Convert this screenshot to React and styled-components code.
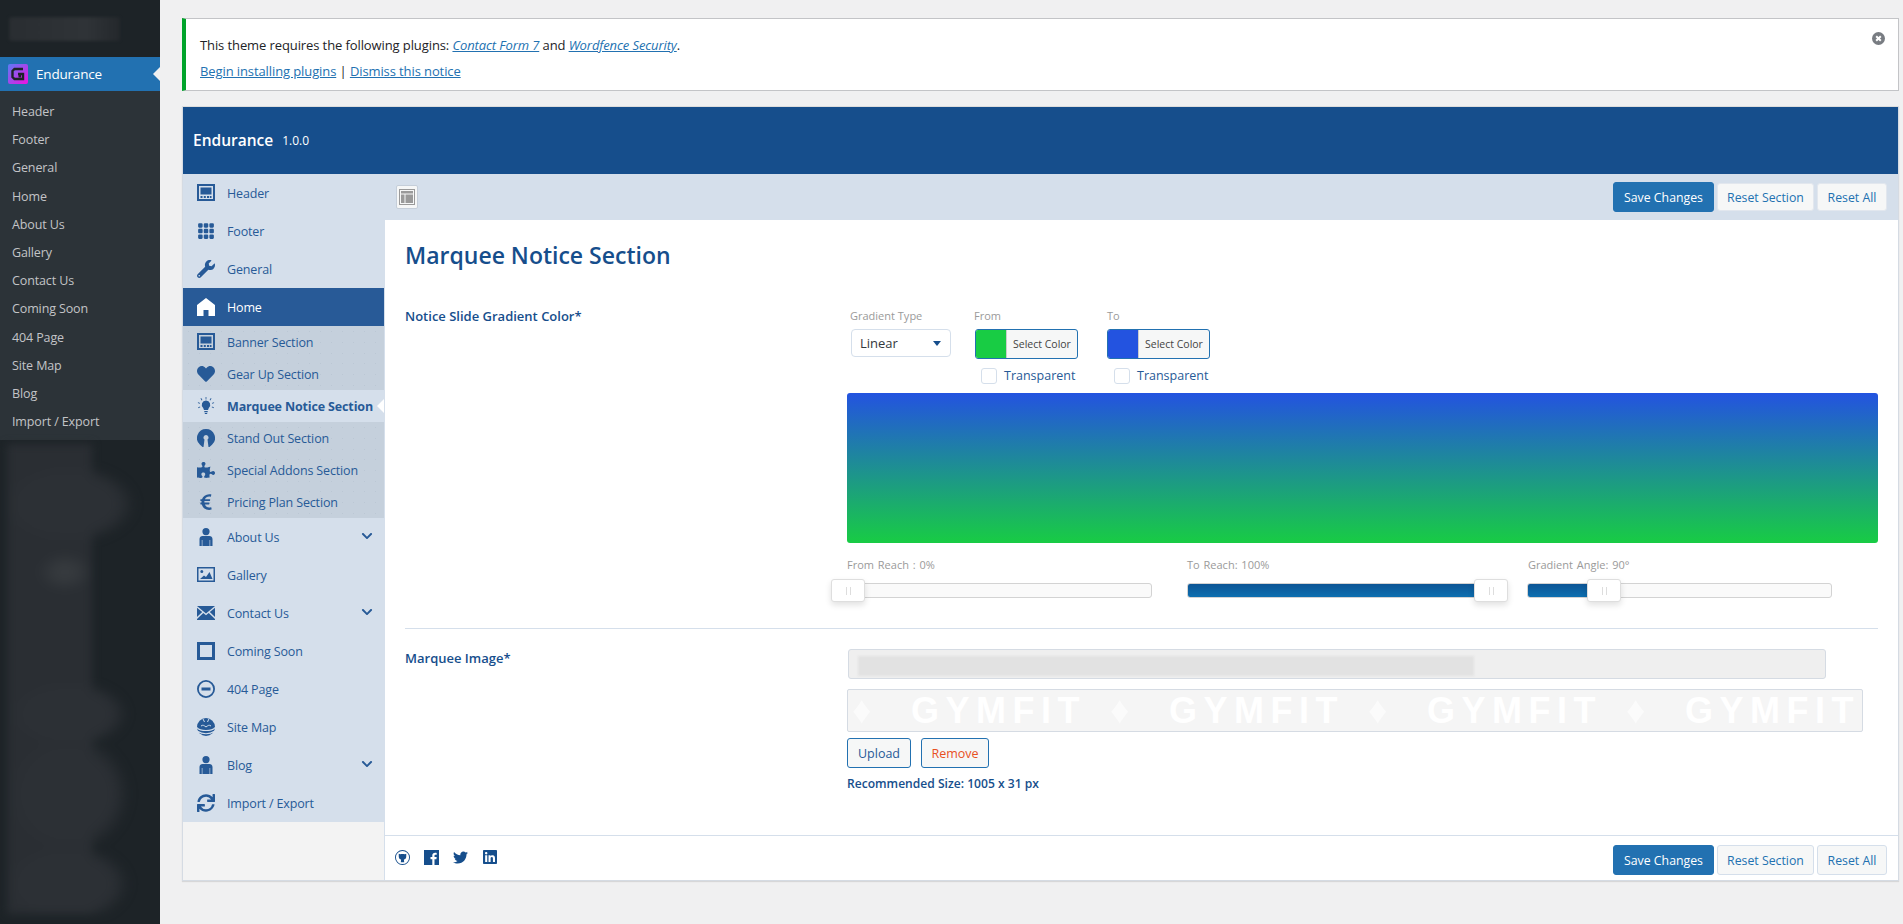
import styled, { createGlobalStyle } from 'styled-components'
import { FaWrench, FaHeart, FaPuzzlePiece, FaEuroSign, FaChevronDown, FaSync, FaTwitter, FaLinkedin } from 'react-icons/fa'
import { BsGrid3X3GapFill } from 'react-icons/bs'

const GlobalStyle = createGlobalStyle`
  html, body { margin: 0; padding: 0; background: #f0f0f1; }
  body { font-family: "Open Sans", "Noto Sans", sans-serif; font-size: 13px; color: #3c434a; }
  * { box-sizing: border-box; }
`

const BLUE = '#164e8c'
const ICON = '#275a97'
const NAV_BG = '#d5dfeb'

/* hand drawn icons, the redux panel uses an icon font we don't have */
const HeaderIcon = () => (
  <svg viewBox="0 0 18 18" width="18" height="18"><path fill="currentColor" fillRule="evenodd" d="M0 0h18v17H0zM2 2v13h14V2zM3.500 3.500h11v7h-11zM3.500 12h2v2h-2zM6.800 12h2v2h-2zM10 12h2v2h-2zM12.800 12h1.700v2h-1.700z" /></svg>
)
const HomeIcon = () => (
  <svg viewBox="0 0 18 18" width="18" height="18"><path fill="currentColor" fillRule="evenodd" d="M9 0l9 7v11h-6.500v-6h-5v6H0V7z" /></svg>
)
const BulbIcon = () => (
  <svg viewBox="0 0 18 18" width="18" height="18"><path fill="currentColor" d="M9 3.500a4.300 4.300 0 0 1 2.800 7.500L11 13H7l-.8-2A4.300 4.300 0 0 1 9 3.500zM7.300 14h3.400v1.200H7.300zM7.800 16h2.400v1H7.800zM8.600 0h.8v2.500h-.8zM3.500 1.500l.7-.4 1.200 2-.7.4zM14.500 1.500l-.7-.4-1.200 2 .7.400zM.8 6l.3-.7 2 .8-.3.7zM17.200 6l-.3-.7-2 .8.3.7zM1 10.500l2-.9.3.7-2 .9zM17 10.500l-2-.9-.3.7 2 .9z" /></svg>
)
const KeyholeIcon = () => (
  <svg viewBox="0 0 18 18" width="18" height="18"><path fill="currentColor" fillRule="evenodd" d="M9 0a9 9 0 0 1 6 15.700L12.500 18h-7L3 15.700A9 9 0 0 1 9 0zm0 6a2.500 2.500 0 0 0-1.500 4.500L6.500 18h5l-1-7.500A2.500 2.500 0 0 0 9 6z" /></svg>
)
const PersonIcon = () => (
  <svg viewBox="0 0 18 18" width="18" height="18"><path fill="currentColor" d="M9 0a3.600 3.600 0 1 1 0 7.200A3.600 3.600 0 0 1 9 0zM5.500 8h7C14 8 15.500 9 15.500 11v7h-2.300v-6h-.6v6H5.400v-6h-.6v6H2.500v-7C2.500 9 4 8 5.500 8z" /></svg>
)
const PictureIcon = () => (
  <svg viewBox="0 0 18 18" width="18" height="18"><path fill="currentColor" fillRule="evenodd" d="M0 1h18v15H0zM1.500 2.500v12h15v-12zM4.800 4a1.500 1.500 0 1 1 0 3 1.500 1.500 0 0 1 0-3zM3 13l4-3.500 2 1.500 3.500-5 3 7z" /></svg>
)
const MailIcon = () => (
  <svg viewBox="0 0 18 18" width="18" height="18"><path fill="currentColor" d="M0 2h18L9 9.500zM0 3.800L5.200 8 0 13zM18 3.800L12.800 8 18 13zM6.300 9L9 11.200 11.700 9 18 15v1H0v-1z" /></svg>
)
const SquareIcon = () => (
  <svg viewBox="0 0 18 18" width="18" height="18"><path fill="currentColor" fillRule="evenodd" d="M0 0h18v18H0zM3 3v12h12V3z" /></svg>
)
const MinusIcon = () => (
  <svg viewBox="0 0 18 18" width="18" height="18"><path fill="currentColor" fillRule="evenodd" d="M9 0a9 9 0 1 1 0 18A9 9 0 0 1 9 0zm0 1.800a7.200 7.200 0 1 0 0 14.400A7.200 7.200 0 0 0 9 1.800zM4.500 7.500h9v3h-9z" /></svg>
)
const GlobeIcon = () => (
  <svg viewBox="0 0 18 18" width="18" height="18">
    <circle cx="9" cy="9" r="9" fill="currentColor" />
    <path d="M0 9.500c3 4 15 4 18 0M1 13.500c4 3 12 3 16 0" fill="none" stroke={NAV_BG} strokeWidth="1.200" />
    <path d="M4 8c2-1.500 3-.5 5 1 2-1.500 3-2.500 5-1" fill="none" stroke={NAV_BG} strokeWidth="1" />
    <path d="M6 1l1.500 3M12 .8L10.500 4" fill="none" stroke={NAV_BG} strokeWidth="1" />
  </svg>
)
const LayoutIcon = () => (
  <svg viewBox="0 0 16 16" width="16" height="16"><path fill="#9a9a9a" fillRule="evenodd" d="M0 0h16v16H0zM1 1v14h14V1zM2 2h12v2.500H2zM2 5.500h3.500V14H2zM6.500 5.500H14V14H6.500z" /></svg>
)
const GithubIcon = () => (
  <svg viewBox="0 0 16 16" width="15" height="15"><path fill={BLUE} fillRule="evenodd" d="M8 0a8 8 0 1 1 0 16A8 8 0 0 1 8 0zm0 1a7 7 0 1 0 0 14A7 7 0 0 0 8 1zM4 4l1.500.6C7 4.300 9 4.300 10.500 4.600L12 4v3c0 2-1.200 3-2.500 3.200L9.800 13H6.200l.3-2.800C5.200 10 4 9 4 7z" /></svg>
)
const FacebookIcon = () => (
  <svg viewBox="0 0 15 15" width="15" height="15"><path fill={BLUE} d="M0 0h15v15h-4.500V9.300h1.900l.3-2.200h-2.200V5.800c0-.6.2-1 1.100-1h1.100V2.900c-.2 0-.9-.1-1.600-.1-1.700 0-2.800 1-2.800 2.800v1.500H6.500v2.200h1.800V15H0z" /></svg>
)
const CloseIcon = () => (
  <svg viewBox="0 0 13 13" width="13" height="13"><circle cx="6.500" cy="6.500" r="6.500" fill="#787c82" /><path d="M4.200 4.200l4.600 4.600M8.800 4.200l-4.600 4.600" stroke="#fff" strokeWidth="2" /></svg>
)
const GymLogo = () => (
  <svg viewBox="0 0 20 20" width="20" height="20">
    <defs><linearGradient id="gl" x1="0" y1="0" x2="1" y2="1"><stop offset="0" stopColor="#5a7cf5" /><stop offset="1" stopColor="#f010e0" /></linearGradient></defs>
    <rect width="20" height="20" rx="2" fill="url(#gl)" />
    <path d="M15 5H6.500L4.500 7v6l2 2H15V10h-5" fill="none" stroke="#1d2327" strokeWidth="2.400" />
    <rect x="10.500" y="11" width="2.500" height="2.500" fill="#1d2327" />
  </svg>
)

const Page = styled.div`
  display: flex;
  min-height: 924px;
`
const AdminBar = styled.aside`
  width: 160px;
  flex: none;
  background: #1d2327;
  display: flex;
  flex-direction: column;
`
const AdminTop = styled.div`
  height: 57px;
  padding: 17px 0 0 9px;
`
const BlurBlock = styled.div`
  width: 111px;
  height: 24px;
  background: linear-gradient(90deg, #292d31, #2f3337 70%, #24282c);
  border-radius: 3px;
  filter: blur(1.500px);
`
const AdminCurrent = styled.a`
  position: relative;
  height: 34px;
  background: #2271b1;
  color: #fff;
  font-size: 13.500px;
  letter-spacing: -.2px;
  display: flex;
  align-items: center;
  gap: 8px;
  padding-left: 8px;
  &::after {
    content: '';
    position: absolute;
    right: 0;
    top: 10px;
    border: 7px solid transparent;
    border-right-color: #f0f0f1;
    border-left: 0;
  }
`
const AdminSub = styled.ul`
  list-style: none;
  margin: 0;
  padding: 7px 0 4px;
  background: #2c3338;
`
const AdminSubItem = styled.li`
  height: 28.200px;
  line-height: 28px;
  padding-left: 12px;
  color: #c3c4c7;
  font-size: 12.500px;
  letter-spacing: -.12px;
`
const AdminBlur = styled.div`
  margin: 4px 0 0 7px;
  width: 132px;
  height: 470px;
  background:
    radial-gradient(ellipse 28px 20px at 58px 128px, #363a3e 30%, transparent),
    radial-gradient(ellipse 68px 40px at 62px 60px, #2c3035 70%, transparent),
    radial-gradient(ellipse 60px 34px at 62px 270px, #2c3035 70%, transparent),
    radial-gradient(ellipse 62px 60px at 62px 350px, #2c3035 70%, transparent),
    radial-gradient(ellipse 64px 40px at 60px 440px, #2c3035 70%, transparent),
    linear-gradient(#2a2e33, #2a2e33) 0 0 / 85px 100% no-repeat;
  filter: blur(4px);
`
const Main = styled.main`
  flex: 1;
  min-width: 0;
  padding: 18px 4px 0 22px;
`
const Notice = styled.div`
  position: relative;
  height: 73px;
  background: #fff;
  border: 1px solid #c3c4c7;
  border-left: 4px solid #00a32a;
  padding: 13px 12px 0 14px;
  color: #1d2327;
  line-height: 26px;
  letter-spacing: -.1px;
  margin-bottom: 15px;
`
const NoticeLine = styled.p`
  margin: 0;
  height: 26px;
`
const NoticeLink = styled.a`
  color: #2271b1;
  text-decoration: underline;
  font-style: ${p => (p.$italic ? 'italic' : 'normal')};
`
const Dismiss = styled.span`
  position: absolute;
  top: 13px;
  right: 13px;
  display: flex;
`
const Panel = styled.section`
  border: 1px solid #d5dbe3;
  border-top-color: #ddd;
  display: flex;
  flex-direction: column;
  height: 775px;
  box-shadow: 0 1px 1px rgba(0,0,0,.1);
`
const PanelHead = styled.header`
  height: 67px;
  flex: none;
  background: ${BLUE};
  color: #fff;
  display: flex;
  align-items: center;
  gap: 9px;
  padding: 0 0 2px 10px;
`
const PanelTitle = styled.h2`
  margin: 0;
  font-size: 15.500px;
  font-weight: 600;
`
const PanelVersion = styled.span`
  font-size: 12px;
  margin-top: 2px;
`
const PanelBody = styled.div`
  flex: 1;
  display: flex;
  min-height: 0;
`
const SideNav = styled.nav`
  width: 202px;
  flex: none;
  background: #f3f3f3;
  border-right: 1px solid ${NAV_BG};
`
const NavItem = styled.a`
  position: relative;
  display: flex;
  align-items: center;
  height: ${p => (p.$sub ? 32 : 38)}px;
  padding-left: 14px;
  gap: 12px;
  font-size: 12.500px;
  letter-spacing: ${p => (p.$current ? '-.15px' : '-.15px')};
  color: ${p => (p.$on ? '#fff' : ICON)};
  font-weight: ${p => (p.$current ? 700 : 400)};
  background-color: ${p => (p.$on ? '#285a97' : p.$current ? NAV_BG : p.$sub ? '#c5d0dc' : NAV_BG)};
  background-image: ${p => (p.$sub && !p.$current ? 'radial-gradient(#bbc7d4 .6px, transparent .7px)' : 'none')};
  background-size: 11px 11px;
  white-space: nowrap;
  svg { flex: none; }
`
const NavChevron = styled.span`
  position: absolute;
  right: 11px;
  top: 12px;
  display: flex;
`
const NavCaret = styled.span`
  position: absolute;
  right: 0;
  top: 9px;
  border: 7px solid transparent;
  border-right: 7px solid #fff;
  border-left: 0;
`
const Content = styled.div`
  flex: 1;
  min-width: 0;
  background: ${NAV_BG};
  display: flex;
  flex-direction: column;
`
const TopBar = styled.div`
  height: 46px;
  flex: none;
  display: flex;
  align-items: center;
  justify-content: space-between;
  padding: 0 11px 0 11px;
`
const Toggle = styled.span`
  width: 22px;
  height: 24px;
  background: #f6f7f7;
  border: 1px solid #c5ced9;
  border-radius: 2px;
  display: flex;
  align-items: center;
  justify-content: center;
`
const Actions = styled.div`
  display: flex;
  align-items: center;
  gap: 3px;
`
const Button = styled.button`
  width: ${p => p.$w}px;
  height: ${p => (p.$slim ? 28 : 30)}px;
  padding: 0;
  font: 12.300px "Open Sans", sans-serif;
  border-radius: 3px;
  border: 1px solid ${p => (p.$primary ? '#2271b1' : p.$slim ? '#e2e7ee' : NAV_BG)};
  background: ${p => (p.$primary ? '#2271b1' : '#f6f7f7')};
  color: ${p => (p.$primary ? '#fff' : '#2271b1')};
`
const Sheet = styled.div`
  flex: 1;
  background: #fff;
  padding: 0 20px;
`
const SheetTitle = styled.h1`
  margin: 0;
  padding: 19px 0 0;
  height: 87px;
  font-size: 23px;
  font-weight: 600;
  color: ${BLUE};
`
const Field = styled.div`
  display: grid;
  grid-template-columns: 442px 1fr;
  padding-top: ${p => p.$pad}px;
`
const FieldLabel = styled.label`
  font-size: 13px;
  line-height: 18px;
  font-weight: 600;
  color: ${BLUE};
`
const GradientControls = styled.div`
  display: flex;
  padding: 2px 0 0 3px;
  height: 86px;
`
const ControlCol = styled.div`
  width: ${p => p.$w}px;
  display: flex;
  flex-direction: column;
`
const SmallLabel = styled.span`
  font-size: 11px;
  color: #9a9a9a;
  height: 20px;
  line-height: 14px;
`
const SelectBox = styled.div`
  width: 100px;
  height: 28px;
  margin-left: 1px;
  border: 1px solid ${NAV_BG};
  border-radius: 4px;
  display: flex;
  align-items: center;
  justify-content: space-between;
  padding: 0 9px 0 8px;
  color: #32373c;
  &::after {
    content: '';
    border: 4px solid transparent;
    border-top: 5px solid ${BLUE};
    border-bottom: 0;
  }
`
const ColorButton = styled.div`
  width: 103px;
  height: 30px;
  margin-left: ${p => p.$ml}px;
  border: 1px solid #2271b1;
  border-radius: 3px;
  overflow: hidden;
  display: flex;
  background: #f6f7f7;
  font-size: 10.500px;
  color: #444;
  align-items: center;
`
const Swatch = styled.span`
  width: 31px;
  height: 100%;
  background: ${p => p.$c};
  border-right: 1px solid #ccc;
  margin-right: 6px;
`
const CheckRow = styled.label`
  display: flex;
  align-items: center;
  gap: 7px;
  padding: 8px 0 0 7px;
  font-size: 12.500px;
  color: ${ICON};
  white-space: nowrap;
`
const CheckBox = styled.span`
  width: 16px;
  height: 16px;
  border: 1px solid ${NAV_BG};
  border-radius: 3px;
`
const GradientPreview = styled.div`
  width: 1031px;
  height: 150px;
  border-radius: 3px;
  background: linear-gradient(#2353e0, #18cc44);
`
const Sliders = styled.div`
  display: grid;
  grid-template-columns: 340px 341px 1fr;
  padding-top: 14px;
`
const SliderCol = styled.div`
  display: flex;
  flex-direction: column;
  gap: 11px;
`
const SliderLabel = styled.span`
  font-size: 11px;
  line-height: 15px;
  color: #9a9a9a;
  word-spacing: 1px;
`
const Track = styled.div`
  position: relative;
  width: ${p => p.$w}px;
  height: 15px;
  margin-left: ${p => p.$ml || 0}px;
  border: 1px solid #d3d3d3;
  border-radius: 3px;
  background: #fafafa;
`
const TrackFill = styled.div`
  width: ${p => p.$w};
  height: 100%;
  border-radius: 2px 0 0 2px;
  background: linear-gradient(#0d5595, #0d6fb0);
`
const Handle = styled.span`
  position: absolute;
  top: -5px;
  left: ${p => p.$left};
  width: 34px;
  height: 23px;
  background: #fff;
  border: 1px solid #dedede;
  border-radius: 3px;
  box-shadow: 0 3px 6px rgba(0,0,0,.12);
  display: flex;
  align-items: center;
  justify-content: center;
  &::before {
    content: '';
    width: 3px;
    height: 8px;
    border: solid #ddd;
    border-width: 0 1px;
  }
`
const Divider = styled.hr`
  border: 0;
  border-top: 1px solid ${NAV_BG};
  margin: 30px 0 0;
`
const FileInput = styled.div`
  width: 978px;
  height: 30px;
  margin-left: 1px;
  background: #efefef;
  border: 1px solid #d5dbe3;
  border-radius: 3px;
  padding: 6px 9px;
`
const FileBlur = styled.div`
  width: 616px;
  height: 20px;
  background: #e2e2e2;
  filter: blur(1px);
`
const ImageBox = styled.div`
  width: 1016px;
  height: 43px;
  margin-top: 10px;
  background: #f5f5f5;
  border: 1px solid #d5dbe3;
  border-radius: 2px;
  display: flex;
  align-items: center;
  overflow: hidden;
  padding-left: 4px;
`
const MarqueeWord = styled.span`
  flex: none;
  width: 258px;
  display: flex;
  align-items: center;
  color: #fff;
  font: 700 36px "Liberation Sans", sans-serif;
  letter-spacing: 6.500px;
  white-space: nowrap;
  &::before {
    content: '♦';
    width: 59px;
    font-size: 38px;
    letter-spacing: 0;
    opacity: .6;
  }
`
const ButtonRow = styled.div`
  display: flex;
  gap: 10px;
  margin-top: 6px;
`
const OutlineButton = styled.button`
  width: ${p => p.$w}px;
  height: 30px;
  padding: 0;
  background: #f6f7f7;
  border: 1px solid #2271b1;
  border-radius: 3px;
  font: 12.500px "Open Sans", sans-serif;
  color: ${p => p.$c};
`
const Hint = styled.p`
  margin: 8px 0 0;
  font-size: 12.100px;
  line-height: 16px;
  font-weight: 600;
  color: ${BLUE};
`
const SheetFoot = styled.div`
  height: 45px;
  flex: none;
  background: #fff;
  border-top: 1px solid ${NAV_BG};
  display: flex;
  align-items: center;
  justify-content: space-between;
  padding: 4px 11px 0 10px;
`
const Socials = styled.div`
  display: flex;
  align-items: center;
  gap: 14px;
  color: ${BLUE};
  margin-bottom: 6px;
`

const navItems = [
  { label: 'Header', icon: <HeaderIcon /> },
  { label: 'Footer', icon: <BsGrid3X3GapFill size={18} /> },
  { label: 'General', icon: <FaWrench size={18} /> },
  { label: 'Home', icon: <HomeIcon />, on: true },
  { label: 'Banner Section', icon: <HeaderIcon />, sub: true },
  { label: 'Gear Up Section', icon: <FaHeart size={18} />, sub: true },
  { label: 'Marquee Notice Section', icon: <BulbIcon />, sub: true, current: true },
  { label: 'Stand Out Section', icon: <KeyholeIcon />, sub: true },
  { label: 'Special Addons Section', icon: <FaPuzzlePiece size={18} />, sub: true },
  { label: 'Pricing Plan Section', icon: <FaEuroSign size={18} />, sub: true },
  { label: 'About Us', icon: <PersonIcon />, more: true },
  { label: 'Gallery', icon: <PictureIcon /> },
  { label: 'Contact Us', icon: <MailIcon />, more: true },
  { label: 'Coming Soon', icon: <SquareIcon /> },
  { label: '404 Page', icon: <MinusIcon /> },
  { label: 'Site Map', icon: <GlobeIcon /> },
  { label: 'Blog', icon: <PersonIcon />, more: true },
  { label: 'Import / Export', icon: <FaSync size={18} /> },
]

const adminLinks = ['Header', 'Footer', 'General', 'Home', 'About Us', 'Gallery', 'Contact Us', 'Coming Soon', '404 Page', 'Site Map', 'Blog', 'Import / Export']

const ActionButtons = ({ slim }) => (
  <Actions>
    <Button $primary $w={101}>Save Changes</Button>
    <Button $w={97} $slim={slim}>Reset Section</Button>
    <Button $w={70} $slim={slim}>Reset All</Button>
  </Actions>
)

export default function App() {
  return (
    <Page>
      <GlobalStyle />
      <AdminBar>
        <AdminTop><BlurBlock /></AdminTop>
        <AdminCurrent><GymLogo />Endurance</AdminCurrent>
        <AdminSub>
          {adminLinks.map(l => <AdminSubItem key={l}>{l}</AdminSubItem>)}
        </AdminSub>
        <AdminBlur />
      </AdminBar>
      <Main>
        <Notice>
          <NoticeLine>
            This theme requires the following plugins: <NoticeLink $italic>Contact Form 7</NoticeLink> and <NoticeLink $italic>Wordfence Security</NoticeLink>.
          </NoticeLine>
          <NoticeLine>
            <NoticeLink>Begin installing plugins</NoticeLink> | <NoticeLink>Dismiss this notice</NoticeLink>
          </NoticeLine>
          <Dismiss><CloseIcon /></Dismiss>
        </Notice>
        <Panel>
          <PanelHead>
            <PanelTitle>Endurance</PanelTitle>
            <PanelVersion>1.0.0</PanelVersion>
          </PanelHead>
          <PanelBody>
            <SideNav>
              {navItems.map(n => (
                <NavItem key={n.label} $sub={n.sub} $on={n.on} $current={n.current}>
                  {n.icon}
                  {n.label}
                  {n.more && <NavChevron><FaChevronDown size={12} /></NavChevron>}
                  {n.current && <NavCaret />}
                </NavItem>
              ))}
            </SideNav>
            <Content>
              <TopBar>
                <Toggle><LayoutIcon /></Toggle>
                <ActionButtons slim />
              </TopBar>
              <Sheet>
                <SheetTitle>Marquee Notice Section</SheetTitle>
                <Field $pad={0}>
                  <FieldLabel>Notice Slide Gradient Color*</FieldLabel>
                  <div>
                    <GradientControls>
                      <ControlCol $w={124}>
                        <SmallLabel>Gradient Type</SmallLabel>
                        <SelectBox>Linear</SelectBox>
                      </ControlCol>
                      <ControlCol $w={133}>
                        <SmallLabel>From</SmallLabel>
                        <ColorButton $ml={1}><Swatch $c="#18cc44" />Select Color</ColorButton>
                        <CheckRow><CheckBox />Transparent</CheckRow>
                      </ControlCol>
                      <ControlCol $w={133}>
                        <SmallLabel>To</SmallLabel>
                        <ColorButton $ml={0}><Swatch $c="#2353e0" />Select Color</ColorButton>
                        <CheckRow><CheckBox />Transparent</CheckRow>
                      </ControlCol>
                    </GradientControls>
                    <GradientPreview />
                    <Sliders>
                      <SliderCol>
                        <SliderLabel>From Reach : 0%</SliderLabel>
                        <Track $w={319} $ml={-14}><Handle $left="-3px" /></Track>
                      </SliderCol>
                      <SliderCol>
                        <SliderLabel>To Reach: 100%</SliderLabel>
                        <Track $w={320}><TrackFill $w="100%" /><Handle $left="286px" /></Track>
                      </SliderCol>
                      <SliderCol>
                        <SliderLabel>Gradient Angle: 90°</SliderLabel>
                        <Track $w={305} $ml={-1}><TrackFill $w="60px" /><Handle $left="59px" /></Track>
                      </SliderCol>
                    </Sliders>
                  </div>
                </Field>
                <Divider />
                <Field $pad={20}>
                  <FieldLabel>Marquee Image*</FieldLabel>
                  <div>
                    <FileInput><FileBlur /></FileInput>
                    <ImageBox>
                      <MarqueeWord>GYMFIT</MarqueeWord>
                      <MarqueeWord>GYMFIT</MarqueeWord>
                      <MarqueeWord>GYMFIT</MarqueeWord>
                      <MarqueeWord>GYMFIT</MarqueeWord>
                    </ImageBox>
                    <ButtonRow>
                      <OutlineButton $w={64} $c={ICON}>Upload</OutlineButton>
                      <OutlineButton $w={68} $c="#e8501f">Remove</OutlineButton>
                    </ButtonRow>
                    <Hint>Recommended Size: 1005 x 31 px</Hint>
                  </div>
                </Field>
              </Sheet>
              <SheetFoot>
                <Socials>
                  <GithubIcon />
                  <FacebookIcon />
                  <FaTwitter size={15} />
                  <FaLinkedin size={16} />
                </Socials>
                <ActionButtons />
              </SheetFoot>
            </Content>
          </PanelBody>
        </Panel>
      </Main>
    </Page>
  )
}
